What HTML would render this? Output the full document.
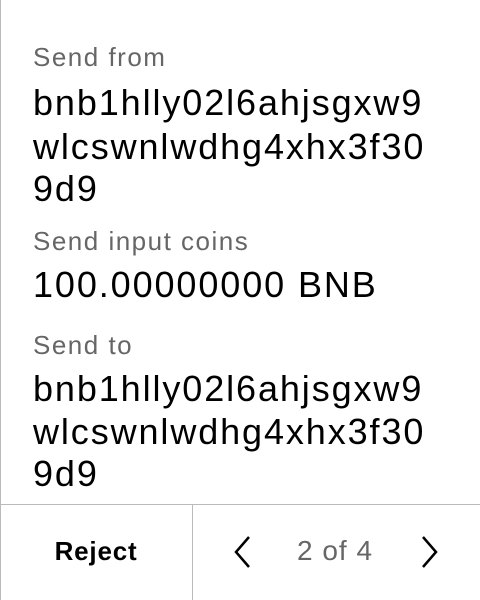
<!DOCTYPE html>
<html><head><style>
body{margin:0;width:480px;height:600px;background:#fff;position:relative;overflow:hidden;font-family:"Liberation Sans",sans-serif;}
.l{position:absolute;left:33px;font-size:26px;color:#666;line-height:30px;white-space:nowrap;letter-spacing:1.5px}
.v{position:absolute;left:33px;font-size:36px;color:#000;line-height:40px;white-space:nowrap;letter-spacing:1.9px}
</style></head><body>
<div style="position:absolute;left:0;top:0;width:1px;height:600px;background:#bbb"></div>
<div class="l" style="top:42px">Send from</div>
<div class="v" style="top:83px">bnb1hlly02l6ahjsgxw9</div>
<div class="v" style="top:127px">wlcswnlwdhg4xhx3f30</div>
<div class="v" style="top:169px">9d9</div>
<div class="l" style="top:226px">Send input coins</div>
<div class="v" style="top:265px">100.00000000 BNB</div>
<div class="l" style="top:330px">Send to</div>
<div class="v" style="top:369px">bnb1hlly02l6ahjsgxw9</div>
<div class="v" style="top:412px">wlcswnlwdhg4xhx3f30</div>
<div class="v" style="top:454px">9d9</div>
<div style="position:absolute;left:0;top:504px;width:480px;height:1px;background:#bbb"></div>
<div style="position:absolute;left:192px;top:505px;width:1px;height:95px;background:#bbb"></div>
<div style="position:absolute;left:0;top:535px;width:192px;text-align:center;font-size:26px;font-weight:bold;line-height:32px;letter-spacing:0.8px">Reject</div>
<svg style="position:absolute;left:230px;top:534px" width="24" height="36" viewBox="0 0 24 36"><path d="M19 3 L6 18 L19 33" fill="none" stroke="#000" stroke-width="2.5"/></svg>
<div style="position:absolute;left:280px;top:535px;width:110px;text-align:center;font-size:28px;color:#666;line-height:32px;letter-spacing:1px">2 of 4</div>
<svg style="position:absolute;left:418px;top:534px" width="24" height="36" viewBox="0 0 24 36"><path d="M5 3 L18 18 L5 33" fill="none" stroke="#000" stroke-width="2.5"/></svg>
</body></html>
